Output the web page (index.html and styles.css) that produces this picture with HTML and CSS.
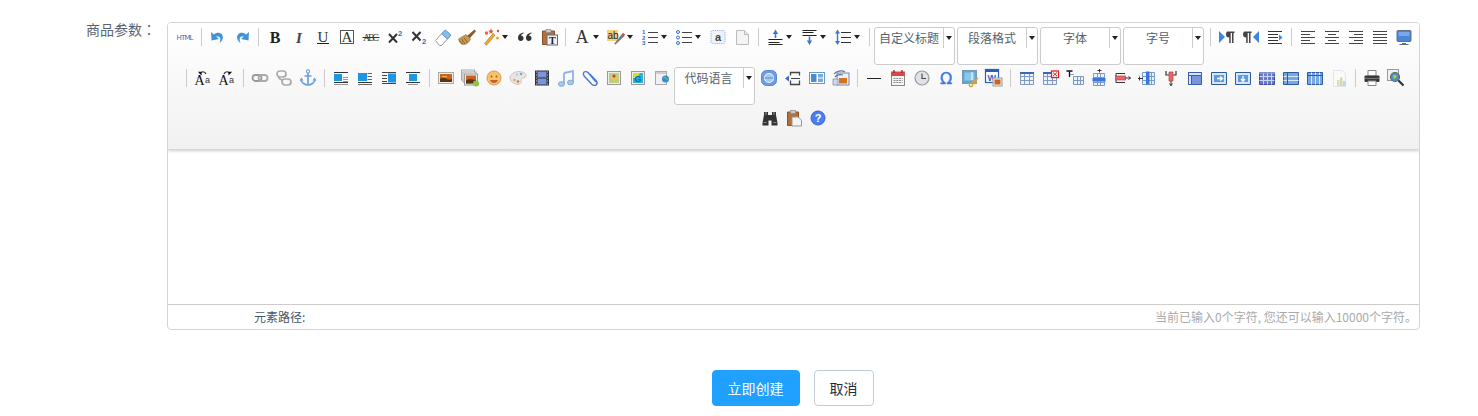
FILE: index.html
```html
<!DOCTYPE html>
<html lang="zh-CN">
<head>
<meta charset="utf-8">
<title>商品参数</title>
<link rel="stylesheet" href="styles.css">
</head>
<body>

<svg class="sprite" xmlns="http://www.w3.org/2000/svg">
  <!-- row one -->
  <symbol id="html" viewBox="0 0 20 20"><text x="1.5" y="12.5" textLength="17" font-family="DejaVu Sans" font-size="7" fill="#3b6ea8">HTML</text></symbol>
  <symbol id="undo" viewBox="0 0 20 20"><path d="M6 7.5c2-2 5.500-2.500 7.500-.5 2.500 2.500 1.500 6.500-2 9 1-2.500 1.500-5-.5-6.200-1.500-.8-3.500-.3-4.500.7z" fill="#3f92d8"/><path d="M3 5l.5 8.500L11 12z" fill="#3f92d8"/></symbol>
  <symbol id="redo" viewBox="0 0 20 20"><g transform="matrix(-1 0 0 1 20 0)"><path d="M6 7.500c2-2 5.500-2.500 7.500-.5 2.500 2.500 1.500 6.500-2 9 1-2.500 1.500-5-.5-6.200-1.500-.8-3.500-.3-4.500.7z" fill="#3f92d8"/><path d="M3 5l.5 8.500L11 12z" fill="#3f92d8"/></g></symbol>
  <symbol id="bold" viewBox="0 0 20 20"><text x="10" y="15.500" text-anchor="middle" font-family="Liberation Serif" font-weight="bold" font-size="16" fill="#222">B</text></symbol>
  <symbol id="italic" viewBox="0 0 20 20"><text x="10" y="15.500" text-anchor="middle" font-family="Liberation Serif" font-weight="bold" font-style="italic" font-size="15" fill="#444">I</text></symbol>
  <symbol id="under" viewBox="0 0 20 20"><text x="10" y="14.500" text-anchor="middle" font-family="Liberation Serif" font-size="15" fill="#333">U</text><path d="M4 16.500h12" stroke="#222"/></symbol>
  <symbol id="boxa" viewBox="0 0 20 20"><rect x="3.500" y="3.500" width="13" height="13" fill="#fff" stroke="#555"/><text x="10" y="15" text-anchor="middle" font-family="Liberation Serif" font-size="15" fill="#333">A</text></symbol>
  <symbol id="strike" viewBox="0 0 20 20"><text x="10" y="14" text-anchor="middle" textLength="16" font-family="Liberation Serif" font-size="10" fill="#444">ABC</text><path d="M1.500 10.500h17" stroke="#333"/></symbol>
  <symbol id="sup" viewBox="0 0 20 20"><path d="M4 7l8 8.500M12 7l-8 8.500" stroke="#333" stroke-width="2"/><text x="13" y="9" font-family="Liberation Sans" font-weight="bold" font-size="7.5" fill="#2f6bd0">2</text></symbol>
  <symbol id="sub" viewBox="0 0 20 20"><path d="M3.500 5l8 8.500M11.500 5l-8 8.500" stroke="#333" stroke-width="2"/><text x="13" y="17" font-family="Liberation Sans" font-weight="bold" font-size="7.500" fill="#2f6bd0">2</text></symbol>
  <symbol id="eraser" viewBox="0 0 20 20"><path d="M2.500 13.500 12 3l6 5-9.500 10.500H6.500z" fill="#fff" stroke="#999"/><path d="M8.500 7 12 3l6 5-3.500 4z" fill="#86bcf0" stroke="#6a9ccc"/></symbol>
  <symbol id="brush" viewBox="0 0 20 20"><path d="M10 9 17.500 2.500l1.500 1.700L12.500 11.500z" fill="#8a5a2a"/><path d="M1.500 12 9 7.500l4.500 4.500c-1.500 4-5.500 6-8 5.500C3.500 17 2 14.500 1.500 12z" fill="#c79a4e" stroke="#8a6a30" stroke-width=".6"/><path d="M4.500 12l3.500 5M7 10.500l3.500 5M2.500 13.500l3 3.500" stroke="#7a5a28" stroke-width=".8"/></symbol>
  <symbol id="magic" viewBox="0 0 20 20"><path d="M3.500 16.500 12 6.500l2 1.700-8.500 10z" fill="#eda93c" stroke="#b87a20" stroke-width=".7"/><path d="M13 1.500l.8 2.500 2.500.3-2 1.500.6 2.300-2-1.300-2 1.300.6-2.300-2-1.500 2.500-.3z" fill="#e0562c" transform="translate(-1 0) scale(.85)"/><circle cx="5.500" cy="6" r="1.700" fill="#ea6a30"/><circle cx="16.500" cy="11" r="1.500" fill="#f0a030"/><circle cx="17" cy="4" r="1.200" fill="#e04a3a"/></symbol>
  <symbol id="quote" viewBox="0 0 20 20"><path d="M8.500 5.500C5.500 6 3 8 3 11c0 2 1.300 3 2.800 3S8.500 13 8.500 11.200 7.300 8.800 6 8.800c.2-1 1.200-1.800 2.500-2.200zM16.500 5.500C13.500 6 11 8 11 11c0 2 1.300 3 2.800 3s2.700-1 2.700-2.800-1.200-2.400-2.500-2.400c.2-1 1.200-1.800 2.500-2.200z" fill="#333"/></symbol>
  <symbol id="pastet" viewBox="0 0 20 20"><path d="M3.500 4h12v13.500h-12z" fill="#b4703a" stroke="#8a5226"/><path d="M7 2.500h5v3H7z" fill="#ccc" stroke="#888" stroke-width=".7"/><rect x="8" y="8" width="10.500" height="10" fill="#eef1f6" stroke="#667"/><text x="13.300" y="16.500" text-anchor="middle" font-family="Liberation Serif" font-weight="bold" font-size="10" fill="#222">T</text></symbol>
  <symbol id="fontcolor" viewBox="0 0 20 20"><text x="10" y="16" text-anchor="middle" font-family="Liberation Serif" font-size="18" fill="#333">A</text></symbol>
  <symbol id="highlight" viewBox="0 0 20 20"><rect x="1" y="3" width="11" height="11" fill="#fbcf7c"/><text x="1.500" y="11.500" font-family="Liberation Sans" font-size="10" fill="#222">ab</text><path d="M8 17 16 7l2.500 2-9 8.500z" fill="#777"/><path d="M15.500 7.500l1.500-1.800 2.200 1.800-1.500 1.800z" fill="#e05040"/></symbol>
  <symbol id="ol" viewBox="0 0 20 20"><path d="M8 5.500h10M8 10.500h10M8 15.500h10" stroke="#444" stroke-width="1.200"/><text x="2" y="7" font-family="Liberation Sans" font-weight="bold" font-size="6" fill="#2f6bd0">1</text><text x="2" y="12.500" font-family="Liberation Sans" font-weight="bold" font-size="6" fill="#2f6bd0">2</text><text x="2" y="18" font-family="Liberation Sans" font-weight="bold" font-size="6" fill="#2f6bd0">3</text></symbol>
  <symbol id="ul" viewBox="0 0 20 20"><path d="M8 5.500h10M8 10.500h10M8 15.500h10" stroke="#444" stroke-width="1.200"/><circle cx="4" cy="5" r="1.500" fill="#fff" stroke="#2f6bd0"/><circle cx="4" cy="10.500" r="1.500" fill="#fff" stroke="#2f6bd0"/><circle cx="4" cy="16" r="1.500" fill="#fff" stroke="#2f6bd0"/></symbol>
  <symbol id="borderdot" viewBox="0 0 20 20"><rect x="3" y="3.500" width="14" height="13" rx="1.500" fill="#eef3fb" stroke="#8eb0e8" stroke-dasharray="1.200 1"/><text x="10" y="14" text-anchor="middle" font-family="Liberation Sans" font-weight="bold" font-size="11" fill="#444">a</text></symbol>
  <symbol id="page" viewBox="0 0 20 20"><path d="M4.500 3.500h8l4 4v10h-12z" fill="#f4f4f4" stroke="#bbb"/><path d="M12.500 3.500v4h4" fill="#e4e4e4" stroke="#bbb"/></symbol>
  <symbol id="rowtop" viewBox="0 0 20 20"><path d="M10.500 2.500 7.800 7h1.900v4h1.600V7h1.900z" fill="#3b78c8"/><path d="M3.500 12.500h14M3.500 15.500h11M3.500 17.500h14" stroke="#222"/></symbol>
  <symbol id="rowbottom" viewBox="0 0 20 20"><path d="M10.500 18 7.800 13.500h1.900v-4h1.600v4h1.900z" fill="#3b78c8"/><path d="M3.500 3.500h14M3.500 5.500h11M3.500 8.500h14" stroke="#222"/></symbol>
  <symbol id="lineheight" viewBox="0 0 20 20"><path d="M8 5.500h10M8 10.500h10M8 15.500h10" stroke="#333" stroke-width="1.200"/><path d="M4.500 2.500 2 6.500h5zM4.500 18 2 14h5z" fill="#3b78c8"/><path d="M4.500 5v10" stroke="#3b78c8" stroke-width="1.400"/></symbol>
  <symbol id="ltr" viewBox="0 0 20 20"><path d="M2 4v12l6-6z" fill="#3d86e0"/><path d="M10 4.500h7.500v1.500h-1v10H15V6h-1.300v10h-1.500v-5.500c-2 0-3.200-1.200-3.200-3s1-3 1-3z" fill="#444"/></symbol>
  <symbol id="rtl" viewBox="0 0 20 20"><path d="M18 4v12l-6-6z" fill="#3d86e0"/><path d="M3.500 4.500h7v1.500h-1v10H8V6H6.700v10H5.200v-5.500c-2 0-3.200-1.200-3.200-3s1-3 1.500-3z" fill="#444"/></symbol>
  <symbol id="indent" viewBox="0 0 20 20"><path d="M3 4.500h14M3 7.500h10M3 10.500h10M3 13.500h10M3 16.500h14" stroke="#333" stroke-width="1.200"/><path d="M14 7.500v6l3.500-3z" fill="#3d86e0"/></symbol>
  <symbol id="aleft" viewBox="0 0 20 20"><path d="M3 4.500h14M3 7.500h9M3 10.500h14M3 13.500h9M3 16.500h14" stroke="#444" stroke-width="1.100"/></symbol>
  <symbol id="acenter" viewBox="0 0 20 20"><path d="M3 4.500h14M6 7.500h8M3 10.500h14M6 13.500h8M3 16.500h14" stroke="#444" stroke-width="1.100"/></symbol>
  <symbol id="aright" viewBox="0 0 20 20"><path d="M3 4.500h14M8 7.500h9M3 10.500h14M8 13.500h9M3 16.500h14" stroke="#444" stroke-width="1.100"/></symbol>
  <symbol id="ajust" viewBox="0 0 20 20"><path d="M3 4.500h14M3 7.500h14M3 10.500h14M3 13.500h14M3 16.500h14" stroke="#444" stroke-width="1.100"/></symbol>
  <symbol id="full" viewBox="0 0 20 20"><rect x="3" y="3.500" width="14" height="11" rx="1" fill="#4d86d8" stroke="#5c6f8c"/><path d="M4.500 5h11v4h-11z" fill="#7aa8ea"/><path d="M8 16.500h4M5.500 17.500h9" stroke="#5c6f8c" stroke-width="1.100"/></symbol>

  <!-- row two -->
  <symbol id="upper" viewBox="0 0 20 20"><text x="1.500" y="17" font-family="Liberation Serif" font-size="14" fill="#111">A</text><text x="12" y="15" font-family="Liberation Sans" font-size="9" fill="#333">a</text><path d="M7 6c1-3 5-3 6 0" fill="none" stroke="#222" stroke-width="1.100"/><path d="M4.800 3.800h3.800v3.600z" fill="#111"/></symbol>
  <symbol id="lower" viewBox="0 0 20 20"><text x="1.500" y="17" font-family="Liberation Serif" font-size="14" fill="#111">A</text><text x="12" y="15" font-family="Liberation Sans" font-size="9" fill="#333">a</text><path d="M7 6c1-3 5-3 6 0" fill="none" stroke="#222" stroke-width="1.100"/><path d="M15.200 3.800h-3.800v3.600z" fill="#111"/></symbol>
  <symbol id="link" viewBox="0 0 20 20"><rect x="2.500" y="7" width="9" height="6" rx="3" fill="none" stroke="#999" stroke-width="1.800"/><rect x="8.500" y="7" width="9" height="6" rx="3" fill="none" stroke="#aaa" stroke-width="1.800"/></symbol>
  <symbol id="unlink" viewBox="0 0 20 20"><rect x="3" y="3" width="9" height="6" rx="3" fill="none" stroke="#aaa" stroke-width="1.700"/><rect x="8" y="11" width="9" height="6" rx="3" fill="none" stroke="#aaa" stroke-width="1.700"/><path d="M4.500 9c.5 2 2 2.500 4 3" fill="none" stroke="#aaa" stroke-width="1.500"/></symbol>
  <symbol id="anchor" viewBox="0 0 20 20"><circle cx="10" cy="3.500" r="1.600" fill="#fff" stroke="#6aa0dc" stroke-width="1.100"/><path d="M10 5v12M6.500 8h7M3 11.500c.5 3.500 4 5.500 7 5.500s6.500-2 7-5.500" fill="none" stroke="#6aa0dc" stroke-width="1.700"/><path d="M1.500 12.500h4l-2-3zM14.500 12.500h4l-2-3z" fill="#6aa0dc"/></symbol>
  <symbol id="imgleft" viewBox="0 0 20 20"><path d="M3 4.500h14M3 14.500h14" stroke="#333"/><path d="M3 6h8v7H3z" fill="#1e96e6"/><path d="M12 9.500h5M12 11.500h5M12 13.500h5M3 16.500h14" stroke="#999"/></symbol>
  <symbol id="imgright" viewBox="0 0 20 20"><path d="M3 14.500h14" stroke="#333"/><path d="M3 5h9v8H3z" fill="#1e96e6"/><path d="M12.500 5.500H17M12.500 8.500H17M12.500 11.500H17M3 16.500h14" stroke="#666"/></symbol>
  <symbol id="imgmid" viewBox="0 0 20 20"><path d="M3 4.500h14M3 7.500h5M3 10.500h5M3 13.500h5M3 15.500h14" stroke="#444"/><path d="M9 5.500h8v9H9z" fill="#1e96e6"/></symbol>
  <symbol id="imgcenter" viewBox="0 0 20 20"><path d="M3 4.500h14M3 14.500h14" stroke="#333"/><path d="M6 6h8v7H6z" fill="#1e96e6"/><path d="M5 16.500h10" stroke="#999"/></symbol>
  <symbol id="simpleimg" viewBox="0 0 20 20"><rect x="2.500" y="4.500" width="15" height="11" fill="#eee" stroke="#aaa"/><path d="M4 6h12v8H4z" fill="#c8641c"/><path d="M4 11c3-2 5-1 7 0s3 1 5-.5V14H4z" fill="#5a3414"/><path d="M6 8h5v1.300H6z" fill="#f0b050"/></symbol>
  <symbol id="multiimg" viewBox="0 0 20 20"><rect x="1.500" y="2" width="13" height="10" fill="#f2f2f2" stroke="#aaa"/><rect x="3" y="4" width="13" height="10" fill="#f2f2f2" stroke="#aaa"/><rect x="4.500" y="6" width="13" height="11" fill="#eee" stroke="#999"/><path d="M6 7.500h10v8H6z" fill="#c8641c"/><path d="M6 12.500c3-2 5-1 10-.5v3.500H6z" fill="#5a3414"/><circle cx="16" cy="15.500" r="3" fill="#8cc43c"/></symbol>
  <symbol id="emotion" viewBox="0 0 20 20"><circle cx="10" cy="10" r="7" fill="#f7c46a" stroke="#d89a50"/><circle cx="7.500" cy="8.500" r="1" fill="#a05a30"/><circle cx="12.500" cy="8.500" r="1" fill="#a05a30"/><path d="M6 12h8c-.5 2-2 3-4 3s-3.500-1-4-3z" fill="#c0603a"/></symbol>
  <symbol id="palette" viewBox="0 0 20 20"><path d="M2 10c0-3.500 4-6.500 9-6.500 4 0 7.500 2 7 4.500-.5 2-3.500 1.500-4.500 3s.5 3-1 4.500c-2 1.500-5 1-7-.5C3.500 14 2 12 2 10z" fill="#e8e6e0" stroke="#c8c8c0"/><circle cx="13" cy="6" r="1.200" fill="#6ca8e0"/><circle cx="9" cy="6.500" r="1.100" fill="#a0c8e0"/><circle cx="6.500" cy="12" r="1.200" fill="#e0a050"/><circle cx="10" cy="13.500" r="1.200" fill="#d07040"/></symbol>
  <symbol id="film" viewBox="0 0 20 20"><rect x="3" y="2.500" width="14" height="15" fill="#333"/><path d="M5.500 3.500h9v6h-9zM5.500 10.500h9v6h-9z" fill="#7a94dc"/><path d="M4 4h1M4 7h1M4 10h1M4 13h1M4 16h1M15 4h1M15 7h1M15 10h1M15 13h1M15 16h1" stroke="#ccc"/></symbol>
  <symbol id="music" viewBox="0 0 20 20"><path d="M8 5 17 3v11" fill="none" stroke="#8cb4e4" stroke-width="1.800"/><path d="M8 5v11" stroke="#8cb4e4" stroke-width="1.800"/><ellipse cx="5.500" cy="16" rx="3" ry="2.300" fill="#a8c8ec" stroke="#7aa8dc"/><ellipse cx="14.500" cy="14.500" rx="3" ry="2.300" fill="#a8c8ec" stroke="#7aa8dc"/></symbol>
  <symbol id="clip" viewBox="0 0 20 20"><path d="M16 14 8 4.500C6.500 3 4 3.500 3.500 5c-.5 1 0 2.200.8 3.200l7.500 8c1.500 1.500 3.500 1.500 4.500.5s1-2.800-.3-4.200L9.500 5.800" fill="none" stroke="#4a78d4" stroke-width="1.400"/></symbol>
  <symbol id="map" viewBox="0 0 20 20"><rect x="3.500" y="3.500" width="13" height="13" fill="#eee" stroke="#999"/><path d="M5 5h10v10H5z" fill="#b8d080"/><path d="M5 10h10M10 5v10" stroke="#e8c860" stroke-width="1.500"/><circle cx="10" cy="8" r="1.500" fill="#e03030"/></symbol>
  <symbol id="gmap" viewBox="0 0 20 20"><rect x="3.500" y="3.500" width="13" height="13" fill="#eee" stroke="#999"/><path d="M5 5h10v10H5z" fill="#20b8e0"/><path d="M5 5h7l-3 5H5z" fill="#c8e030"/><text x="10" y="14" text-anchor="middle" font-family="Liberation Sans" font-weight="bold" font-size="9" fill="#1060a0">G</text></symbol>
  <symbol id="iframe" viewBox="0 0 20 20"><rect x="3.500" y="3.500" width="11" height="13" fill="#f0f0f4" stroke="#aaa"/><path d="M4 4h10v2H4z" fill="#ccd"/><circle cx="13.500" cy="11" r="3.500" fill="#3a8cc8"/><path d="M11.500 10c1-1 2-1 2.500.5s1.500.5 2 0" stroke="#a8d040" fill="none"/></symbol>
  <symbol id="webapp" viewBox="0 0 20 20"><rect x="2.500" y="2.500" width="15" height="15" rx="5" fill="#6a9ce4" stroke="#5a88d0"/><circle cx="10" cy="10" r="4.500" fill="#a8c8f0" stroke="#e4f0ff" stroke-width="1.200"/><path d="M5.500 10h9" stroke="#5a88d0" stroke-width="1.100"/></symbol>
  <symbol id="pagebreak" viewBox="0 0 20 20"><path d="M7.500 7.500v-3h9v3M7.500 12.500v4h9v-4" fill="none" stroke="#444" stroke-width="1.300"/><path d="M8 10.500h9" stroke="#444" stroke-width="1.200"/><path d="M2 10.500l4-3v6z" fill="#3a6cc0"/></symbol>
  <symbol id="template" viewBox="0 0 20 20"><rect x="2.500" y="4.500" width="15" height="11" fill="#fff" stroke="#6a98c8"/><path d="M4 6h5.500v8H4z" fill="#4a8cd0"/><path d="M11 6h5v3.500h-5zM11 10.500h5V14h-5z" fill="#78a8dc"/></symbol>
  <symbol id="bgimg" viewBox="0 0 20 20"><rect x="6" y="5" width="12" height="12" fill="#eef" stroke="#789"/><path d="M8 10h8v5.500H8z" fill="#d87020"/><path d="M3 6c2-3 8-4 11-2M4 9c1-2 5-3 8-2" fill="none" stroke="#5878a8" stroke-width="1.300"/><path d="M2 11h5v6H2z" fill="#cfd8e8" stroke="#789" stroke-width=".7"/></symbol>
  <symbol id="hr" viewBox="0 0 20 20"><path d="M3 10.500h14" stroke="#222"/></symbol>
  <symbol id="date" viewBox="0 0 20 20"><rect x="3.500" y="4.500" width="13" height="13" fill="#f4f4f4" stroke="#888"/><path d="M3 3.500h14V8H3z" fill="#d84848"/><path d="M6 2v3M14 2v3" stroke="#a02020" stroke-width="1.300"/><path d="M5.500 10.500h9M5.500 12.500h9M5.500 14.500h9" stroke="#8a8a8a" stroke-dasharray="2 .8"/></symbol>
  <symbol id="time" viewBox="0 0 20 20"><circle cx="10" cy="10" r="7" fill="#dfe2e8" stroke="#999" stroke-width="1.200"/><path d="M10 5.500V10.500H14" fill="none" stroke="#444" stroke-width="1.100"/></symbol>
  <symbol id="omega" viewBox="0 0 20 20"><text x="10" y="16" text-anchor="middle" font-family="DejaVu Sans" font-size="16" fill="#3a78e0" stroke="#3a78e0" stroke-width=".4">Ω</text></symbol>
  <symbol id="snap" viewBox="0 0 20 20"><rect x="2.500" y="2.500" width="14" height="13" fill="#58a8d8" stroke="#7898b8"/><path d="M4.500 4.500h10v8h-10z" fill="#8cc8e8"/><path d="M12 4v8" stroke="#fff"/><circle cx="14.500" cy="14" r="1.700" fill="none" stroke="#d8a040" stroke-width="1.400"/><circle cx="11" cy="17" r="1.700" fill="none" stroke="#d8a040" stroke-width="1.400"/><path d="M12 16l6-6" stroke="#d8a040" stroke-width="1.400"/></symbol>
  <symbol id="word" viewBox="0 0 20 20"><rect x="1.500" y="1.500" width="13" height="13" fill="#fff" stroke="#2a5cc0" stroke-width="1.200"/><path d="M2 2h12v2H2z" fill="#2a5cc0"/><text x="3.500" y="12.500" font-family="Liberation Sans" font-weight="bold" font-size="9" fill="#2a5cc0">W</text><rect x="9" y="10" width="9" height="8" fill="#f0f0f0" stroke="#999"/><path d="M10.500 11.500h6v5h-6z" fill="#c8641c"/></symbol>
  <symbol id="table" viewBox="0 0 20 20"><path d="M3.500 4.500h13v12h-13z" fill="#eef2fa" stroke="#8098c4"/><path d="M3.500 8.500h13M3.500 12.500h13M7.500 4.500v12M12.500 4.500v12" stroke="#8098c4"/><path d="M3 5h14" stroke="#3f67b5" stroke-width="2"/></symbol>
  <symbol id="tabledel" viewBox="0 0 20 20"><path d="M2.500 4.500h13v12h-13z" fill="#eef2fa" stroke="#8098c4"/><path d="M2.500 8.500h13M2.500 12.500h13M6.500 4.500v12M11.500 4.500v12" stroke="#8098c4"/><path d="M2 5h9" stroke="#3f67b5" stroke-width="2"/><rect x="10.500" y="3" width="7" height="6.500" fill="#fff" stroke="#e02020" stroke-width="1.300"/><path d="M12 4.500l4 3.500M16 4.500l-4 3.500" stroke="#e02020"/></symbol>
  <symbol id="tabletitle" viewBox="0 0 20 20"><path d="M1.500 3h6M4.500 3v6" stroke="#111" stroke-width="1.300"/><path d="M8.500 8.500h10v8h-10zM8.500 12.500h10M12.500 8.500v8M15.500 8.500v8" fill="#eef2fa" stroke="#8098c4"/><path d="M5 6.500h4" stroke="#8098c4"/></symbol>
  <symbol id="rowins" viewBox="0 0 20 20"><path d="M4.500 5.500h11v12h-11zM4.500 9.500h11M4.500 14.500h11M8.500 5.500v12M11.500 5.500v12" fill="#eef2fa" stroke="#7898d4"/><path d="M3.500 10h13v3.500h-13z" fill="#3a78d8"/><path d="M10.500 1v3.500M8.500 2.500h4" stroke="#333"/></symbol>
  <symbol id="rowdel" viewBox="0 0 20 20"><path d="M3 5.500h9M3 14.500h9" stroke="#333" stroke-width="1.200"/><path d="M2.500 8h10v4h-10z" fill="#e86868" stroke="#b84040" stroke-width=".7"/><path d="M12.500 10h5M15.500 8.500l2 1.500-2 1.500" fill="none" stroke="#333"/><path d="M3 5.500V8M3 12v2.500" stroke="#333"/></symbol>
  <symbol id="colins" viewBox="0 0 20 20"><path d="M5.500 4.500h12v12h-12zM9.500 4.500v12M14.500 4.500v12M5.500 8.500h12M5.500 12.500h12" fill="#eef2fa" stroke="#7898d4"/><path d="M9 3.500h3.500v13H9z" fill="#3a78d8"/><path d="M1 10.500h5M2.500 8.500v4" stroke="#333"/></symbol>
  <symbol id="coldel" viewBox="0 0 20 20"><path d="M5 3v4h10V3" fill="none" stroke="#333" stroke-width="1.200"/><path d="M8 4h4v9H8z" fill="#e86868" stroke="#b84040" stroke-width=".7"/><path d="M10 13v5M8.500 15.500l1.500 2 1.500-2" fill="none" stroke="#333"/></symbol>
  <symbol id="merge" viewBox="0 0 20 20"><path d="M3.500 4.500h13v12h-13z" fill="#7a94dc" stroke="#3a5cb0"/><path d="M3.500 4.500h13v3h-13z" fill="#d8e4f8" stroke="#3a5cb0"/><path d="M3.500 7.500h3v9h-3z" fill="#d8e4f8" stroke="#3a5cb0"/></symbol>
  <symbol id="mergeright" viewBox="0 0 20 20"><path d="M2.500 4.500h15v12h-15z" fill="#d8e4f8" stroke="#2a5ca0"/><path d="M5 7h10v7H5z" fill="#5c9cdc"/><path d="M8 10.500h5M11 8.500l2.500 2-2.500 2" fill="none" stroke="#fff" stroke-width="1.400"/></symbol>
  <symbol id="mergedown" viewBox="0 0 20 20"><path d="M2.500 4.500h15v12h-15z" fill="#d8e4f8" stroke="#2a5ca0"/><path d="M5 7h10v7H5z" fill="#5c9cdc"/><path d="M10 8v5M8 11l2 2.500 2-2.500" fill="none" stroke="#fff" stroke-width="1.400"/></symbol>
  <symbol id="split" viewBox="0 0 20 20"><path d="M2.500 4.500h15v12h-15z" fill="#6a78c8" stroke="#3a4ca8"/><path d="M2.500 8.500h15M2.500 12.500h15M6.500 4.500v12M10.500 4.500v12M14.500 4.500v12" stroke="#c8d4f4"/><path d="M2 5h16" stroke="#8ea8d8" stroke-width="1.500"/></symbol>
  <symbol id="splitrow" viewBox="0 0 20 20"><path d="M2.500 4.500h15v12h-15z" fill="#78a8e4" stroke="#2a5ca0"/><path d="M2.500 8.500h15M2.500 12.500h15" stroke="#dce8f8"/><path d="M6.500 4.500v12" stroke="#2a5ca0"/></symbol>
  <symbol id="splitcol" viewBox="0 0 20 20"><path d="M2.500 4.500h15v12h-15z" fill="#78a8e4" stroke="#2a5ca0"/><path d="M6.500 4.500v12M10.500 4.500v12M14.500 4.500v12" stroke="#dce8f8"/><path d="M2.500 7.500h15" stroke="#2a5ca0"/></symbol>
  <symbol id="charts" viewBox="0 0 20 20"><path d="M4.500 2.500h9l3 3v13h-12z" fill="#fafafa" stroke="#e4e4e4"/><path d="M8 12h2.500v6H8z" fill="#e8d8b4"/><path d="M11 9.500h2.500V18H11z" fill="#c8dcb0"/><path d="M14 13h2.500v5H14z" fill="#b8d4e8"/></symbol>
  <symbol id="print" viewBox="0 0 20 20"><path d="M6 2.500h8V8H6z" fill="#fff" stroke="#888"/><rect x="2.500" y="7.500" width="15" height="6.500" rx="1" fill="#3a3a3a"/><path d="M6 13h8v4.500H6z" fill="#fff" stroke="#888"/><path d="M3 10.500h14" stroke="#777"/></symbol>
  <symbol id="preview" viewBox="0 0 20 20"><rect x="1.500" y="1.500" width="11" height="11" fill="#f0f0f4" stroke="#999"/><circle cx="9" cy="9" r="4.500" fill="#4a90c8" stroke="#666" stroke-width="1.200"/><path d="M7 7.500c1.500-1 3-.5 4 1-1 1.500-2 2.500-3.500 2.500z" fill="#a8d040"/><path d="M12.500 12.500l5 5" stroke="#333" stroke-width="2.200"/></symbol>

  <!-- row three -->
  <symbol id="search" viewBox="0 0 20 20"><path d="M4 4h4v3h4V4h4v3l1.500 8v2.500h-6v-5h-3v5h-6V15L4 7z" fill="#333"/><path d="M5 4h2v3H5zM13 4h2v3h-2z" fill="#666"/><path d="M3.500 14.500h3M13.500 14.500h3" stroke="#888"/></symbol>
  <symbol id="pastedoc" viewBox="0 0 20 20"><path d="M3.500 4h11v13.500h-11z" fill="#b4703a" stroke="#8a5226"/><path d="M6.500 2.500h5v3h-5z" fill="#ccc" stroke="#888" stroke-width=".7"/><path d="M8 9h6l3.500 3v6H8z" fill="#f4f4f6" stroke="#999"/></symbol>
  <symbol id="help" viewBox="0 0 20 20"><circle cx="10" cy="10" r="7" fill="#4a7ef0" stroke="#3a64c8"/><text x="10" y="14" text-anchor="middle" font-family="Liberation Sans" font-weight="bold" font-size="11" fill="#fff">?</text></symbol>
</svg>

<main class="page">
  <div class="field">
    <label class="field-label" lang="zh-TW">商品参数：</label>
    <div class="field-main">
      <div class="editor">
        <div class="toolbar">
          <div class="tb-row">
            <span class="btn"><svg><use href="#html"/></svg></span>
            <span class="sep"></span>
            <span class="btn"><svg><use href="#undo"/></svg></span>
            <span class="btn"><svg><use href="#redo"/></svg></span>
            <span class="sep"></span>
            <span class="btn"><svg><use href="#bold"/></svg></span>
            <span class="btn"><svg><use href="#italic"/></svg></span>
            <span class="btn"><svg><use href="#under"/></svg></span>
            <span class="btn"><svg><use href="#boxa"/></svg></span>
            <span class="btn"><svg><use href="#strike"/></svg></span>
            <span class="btn"><svg><use href="#sup"/></svg></span>
            <span class="btn"><svg><use href="#sub"/></svg></span>
            <span class="btn"><svg><use href="#eraser"/></svg></span>
            <span class="btn"><svg><use href="#brush"/></svg></span>
            <span class="btn more"><svg><use href="#magic"/></svg><i class="caret"></i></span>
            <span class="btn"><svg><use href="#quote"/></svg></span>
            <span class="btn"><svg><use href="#pastet"/></svg></span>
            <span class="sep"></span>
            <span class="btn more"><svg><use href="#fontcolor"/></svg><i class="caret"></i></span>
            <span class="btn more"><svg><use href="#highlight"/></svg><i class="caret"></i></span>
            <span class="btn more"><svg><use href="#ol"/></svg><i class="caret"></i></span>
            <span class="btn more"><svg><use href="#ul"/></svg><i class="caret"></i></span>
            <span class="btn"><svg><use href="#borderdot"/></svg></span>
            <span class="btn"><svg><use href="#page"/></svg></span>
            <span class="sep"></span>
            <span class="btn more"><svg><use href="#rowtop"/></svg><i class="caret"></i></span>
            <span class="btn more"><svg><use href="#rowbottom"/></svg><i class="caret"></i></span>
            <span class="btn more"><svg><use href="#lineheight"/></svg><i class="caret"></i></span>
            <span class="sep"></span>
            <span class="combo"><span class="combo-label">自定义标题</span><span class="combo-arrow"><i class="caret"></i></span></span>
            <span class="combo"><span class="combo-label">段落格式</span><span class="combo-arrow"><i class="caret"></i></span></span>
            <span class="combo"><span class="combo-label">字体</span><span class="combo-arrow"><i class="caret"></i></span></span>
            <span class="combo"><span class="combo-label">字号</span><span class="combo-arrow"><i class="caret"></i></span></span>
            <span class="sep"></span>
            <span class="btn"><svg><use href="#ltr"/></svg></span>
            <span class="btn"><svg><use href="#rtl"/></svg></span>
            <span class="btn"><svg><use href="#indent"/></svg></span>
            <span class="sep"></span>
            <span class="btn"><svg><use href="#aleft"/></svg></span>
            <span class="btn"><svg><use href="#acenter"/></svg></span>
            <span class="btn"><svg><use href="#aright"/></svg></span>
            <span class="btn"><svg><use href="#ajust"/></svg></span>
            <span class="btn"><svg><use href="#full"/></svg></span>
          </div>
          <div class="tb-row tb-row-second">
            <span class="sep"></span>
            <span class="btn"><svg><use href="#upper"/></svg></span>
            <span class="btn"><svg><use href="#lower"/></svg></span>
            <span class="sep"></span>
            <span class="btn"><svg><use href="#link"/></svg></span>
            <span class="btn"><svg><use href="#unlink"/></svg></span>
            <span class="btn"><svg><use href="#anchor"/></svg></span>
            <span class="sep"></span>
            <span class="btn"><svg><use href="#imgleft"/></svg></span>
            <span class="btn"><svg><use href="#imgright"/></svg></span>
            <span class="btn"><svg><use href="#imgmid"/></svg></span>
            <span class="btn"><svg><use href="#imgcenter"/></svg></span>
            <span class="sep"></span>
            <span class="btn"><svg><use href="#simpleimg"/></svg></span>
            <span class="btn"><svg><use href="#multiimg"/></svg></span>
            <span class="btn"><svg><use href="#emotion"/></svg></span>
            <span class="btn"><svg><use href="#palette"/></svg></span>
            <span class="btn"><svg><use href="#film"/></svg></span>
            <span class="btn"><svg><use href="#music"/></svg></span>
            <span class="btn"><svg><use href="#clip"/></svg></span>
            <span class="btn"><svg><use href="#map"/></svg></span>
            <span class="btn"><svg><use href="#gmap"/></svg></span>
            <span class="btn"><svg><use href="#iframe"/></svg></span>
            <span class="combo"><span class="combo-label">代码语言</span><span class="combo-arrow"><i class="caret"></i></span></span>
            <span class="btn"><svg><use href="#webapp"/></svg></span>
            <span class="btn"><svg><use href="#pagebreak"/></svg></span>
            <span class="btn"><svg><use href="#template"/></svg></span>
            <span class="btn"><svg><use href="#bgimg"/></svg></span>
            <span class="sep"></span>
            <span class="btn"><svg><use href="#hr"/></svg></span>
            <span class="btn"><svg><use href="#date"/></svg></span>
            <span class="btn"><svg><use href="#time"/></svg></span>
            <span class="btn"><svg><use href="#omega"/></svg></span>
            <span class="btn"><svg><use href="#snap"/></svg></span>
            <span class="btn"><svg><use href="#word"/></svg></span>
            <span class="sep"></span>
            <span class="btn"><svg><use href="#table"/></svg></span>
            <span class="btn"><svg><use href="#tabledel"/></svg></span>
            <span class="btn"><svg><use href="#tabletitle"/></svg></span>
            <span class="btn"><svg><use href="#rowins"/></svg></span>
            <span class="btn"><svg><use href="#rowdel"/></svg></span>
            <span class="btn"><svg><use href="#colins"/></svg></span>
            <span class="btn"><svg><use href="#coldel"/></svg></span>
            <span class="btn"><svg><use href="#merge"/></svg></span>
            <span class="btn"><svg><use href="#mergeright"/></svg></span>
            <span class="btn"><svg><use href="#mergedown"/></svg></span>
            <span class="btn"><svg><use href="#split"/></svg></span>
            <span class="btn"><svg><use href="#splitrow"/></svg></span>
            <span class="btn"><svg><use href="#splitcol"/></svg></span>
            <span class="btn"><svg><use href="#charts"/></svg></span>
            <span class="sep"></span>
            <span class="btn"><svg><use href="#print"/></svg></span>
            <span class="btn"><svg><use href="#preview"/></svg></span>
          </div>
          <div class="tb-row tb-row-third">
            <span class="btn"><svg><use href="#search"/></svg></span>
            <span class="btn"><svg><use href="#pastedoc"/></svg></span>
            <span class="btn"><svg><use href="#help"/></svg></span>
          </div>
        </div>
        <div class="editor-body"></div>
        <div class="statusbar">
          <span class="path">元素路径:</span>
          <span class="count">当前已输入0个字符, 您还可以输入10000个字符。</span>
        </div>
      </div>
      <div class="actions">
        <button class="action action-primary" type="button">立即创建</button>
        <button class="action" type="button">取消</button>
      </div>
    </div>
  </div>
</main>

</body>
</html>
```

FILE: styles.css
```css
html { background: #fff; }

body {
  margin: 0;
  font-family: "Noto Sans CJK SC", "Liberation Sans", sans-serif;
  color: #48576a;
}

.sprite { display: none; }

.page { padding-top: 22px; }

.field { display: flex; }

.field-label {
  width: 167px;
  flex: none;
  padding-right: 11px;
  box-sizing: border-box;
  text-align: right;
  font-family: "Noto Sans CJK TC", "Liberation Sans", sans-serif;
  font-size: 14px;
  line-height: 17px;
  margin-top: -1px;
  color: #5a6472;
}

.field-main {
  width: 1253px;
  flex: none;
}

/* editor shell */
.editor {
  height: 308px;
  box-sizing: border-box;
  display: flex;
  flex-direction: column;
  border: 1px solid #d4d4d4;
  border-radius: 4px;
  overflow: hidden;
}

.toolbar {
  height: 127px;
  flex: none;
  box-sizing: border-box;
  padding-top: 4px;
  background: linear-gradient(to bottom, #fff, #f1f1f1);
  border-bottom: 1px solid #d8d8d8;
  box-shadow: 0 1px 3px #ccc;
  position: relative;
}

.tb-row {
  display: flex;
  justify-content: center;
  align-items: flex-start;
  height: 40px;
  padding-left: 2px;
  box-sizing: border-box;
}

.tb-row-second { height: 41px; }
.tb-row-second .btn, .tb-row-second .sep { margin-top: 1px; }

.tb-row-third { height: 20px; padding-left: 1px; }

.btn {
  flex: none;
  display: flex;
  align-items: center;
  width: 24px;
  height: 20px;
}

.btn svg {
  display: block;
  width: 20px;
  height: 20px;
  margin: 0 2px;
}

.btn.more { width: 34px; }

.caret {
  display: block;
  width: 0;
  height: 0;
  border: 3.5px solid transparent;
  border-top: 4px solid #222;
  border-bottom: 0;
}

.btn.more .caret { margin-left: -1px; }

.sep {
  flex: none;
  width: 9px;
  height: 20px;
  position: relative;
}

.sep::before {
  content: "";
  position: absolute;
  left: 4px;
  top: 1px;
  width: 1px;
  height: 18px;
  background: #ccc;
}

.combo {
  flex: none;
  display: flex;
  align-items: flex-start;
  width: 81px;
  height: 38px;
  box-sizing: border-box;
  margin-right: 2px;
  background: #fff;
  border: 1px solid #ccc;
  border-radius: 3px;
}

.combo-label {
  width: 69px;
  height: 20px;
  box-sizing: border-box;
  border-right: 1px solid #ccc;
  text-align: center;
  font-size: 12px;
  line-height: 19px;
  color: #555f6b;
}

.combo-arrow {
  flex: 1;
  height: 20px;
  display: flex;
  align-items: center;
  justify-content: center;
}

.editor-body {
  flex: 1;
  background: #fff;
}

.statusbar {
  height: 25px;
  flex: none;
  box-sizing: border-box;
  display: flex;
  justify-content: space-between;
  align-items: center;
  padding: 0 2px 0 86px;
  border-top: 1px solid #ccc;
  font-size: 12px;
  line-height: 22px;
}

.path { color: #48576a; }
.count { color: #aaa; }

/* form buttons */
.actions {
  display: flex;
  justify-content: center;
  gap: 14px;
  margin-top: 40px;
  padding-right: 2px;
}

.action {
  height: 36px;
  width: 60px;
  padding: 0;
  box-sizing: border-box;
  background: #fff;
  border: 1px solid #c0ccda;
  border-radius: 4px;
  font-family: inherit;
  font-size: 14px;
  color: #1f2d3d;
}

.action-primary {
  width: 88px;
  background: #20a0ff;
  border-color: #20a0ff;
  color: #fff;
}
```
